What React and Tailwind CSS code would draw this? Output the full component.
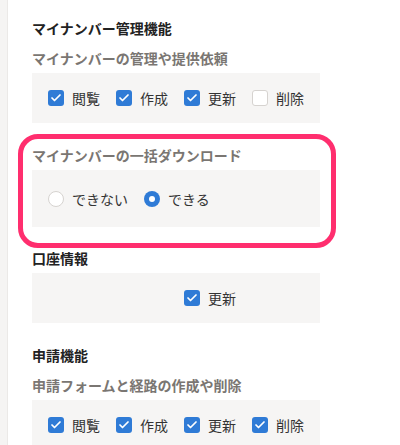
import { Check } from 'lucide-react';

// 権限設定パネル
const font = { fontFamily: '"Noto Sans CJK JP", "Noto Sans", sans-serif' };

const CheckItem = ({ label, checked = true }) => (
  <label className="flex items-center gap-2">
    {checked ? (
      <span className="flex h-4 w-4 items-center justify-center rounded-[3px] bg-[#2f7bd6]">
        <Check className="h-3 w-3 text-white" strokeWidth={3.5} />
      </span>
    ) : (
      <span className="h-4 w-4 rounded-[3px] border border-[#d6d3d0] bg-white" />
    )}
    <span className="text-sm leading-5 text-[#333]">{label}</span>
  </label>
);

const RadioItem = ({ label, checked }) => (
  <label className="flex items-center gap-2">
    {checked ? (
      <span className="flex h-4 w-4 items-center justify-center rounded-full bg-[#2f7bd6]">
        <span className="h-[6px] w-[6px] rounded-full bg-white" />
      </span>
    ) : (
      <span className="h-4 w-4 rounded-full border border-[#d6d3d0] bg-white" />
    )}
    <span className="text-sm leading-5 text-[#333]">{label}</span>
  </label>
);

const Title = ({ children }) => (
  <h3 className="text-sm font-bold leading-5 text-[#222]">{children}</h3>
);

const SubTitle = ({ children }) => (
  <p className="text-sm font-bold leading-5 text-[#7a7672]">{children}</p>
);

const Box = ({ children, className = 'h-[50px]' }) => (
  <div className={`mt-[5px] flex w-[288px] items-center gap-4 bg-[#f6f5f4] pl-4 ${className}`}>
    {children}
  </div>
);

const CRUD = ['閲覧', '作成', '更新', '削除'];

export default function App() {
  return (
    <div className="flex h-[445px] w-[400px] overflow-hidden bg-white" style={font}>
      <div className="w-2 shrink-0 border-r border-[#ebe9e7] bg-[#f5f4f3]" />
      <div className="flex-1 pl-6 pt-[18px]">
        <Title>マイナンバー管理機能</Title>
        <div className="mt-[10px]">
          <SubTitle>マイナンバーの管理や提供依頼</SubTitle>
          <Box>
            {CRUD.map((l) => (
              <CheckItem key={l} label={l} checked={l !== '削除'} />
            ))}
          </Box>
        </div>

        <div className="relative mt-[22px] w-[288px]">
          <div className="pointer-events-none absolute -top-[11px] -bottom-[21px] -left-[14px] -right-[16px] rounded-[20px] border-[5px] border-[#ff2e6e]" />
          <SubTitle>マイナンバーの一括ダウンロード</SubTitle>
          <Box className="h-[57px]">
            <RadioItem label="できない" />
            <RadioItem label="できる" checked />
          </Box>
        </div>

        <div className="mt-[21px]">
          <Title>口座情報</Title>
          <Box>
            <div className="grid grid-cols-[repeat(4,52px)] gap-x-4">
              <div className="col-start-3">
                <CheckItem label="更新" />
              </div>
            </div>
          </Box>
        </div>

        <div className="mt-[22px]">
          <Title>申請機能</Title>
          <div className="mt-[10px]">
            <SubTitle>申請フォームと経路の作成や削除</SubTitle>
            <Box>
              {CRUD.map((l) => (
                <CheckItem key={l} label={l} />
              ))}
            </Box>
          </div>
        </div>
      </div>
    </div>
  );
}
